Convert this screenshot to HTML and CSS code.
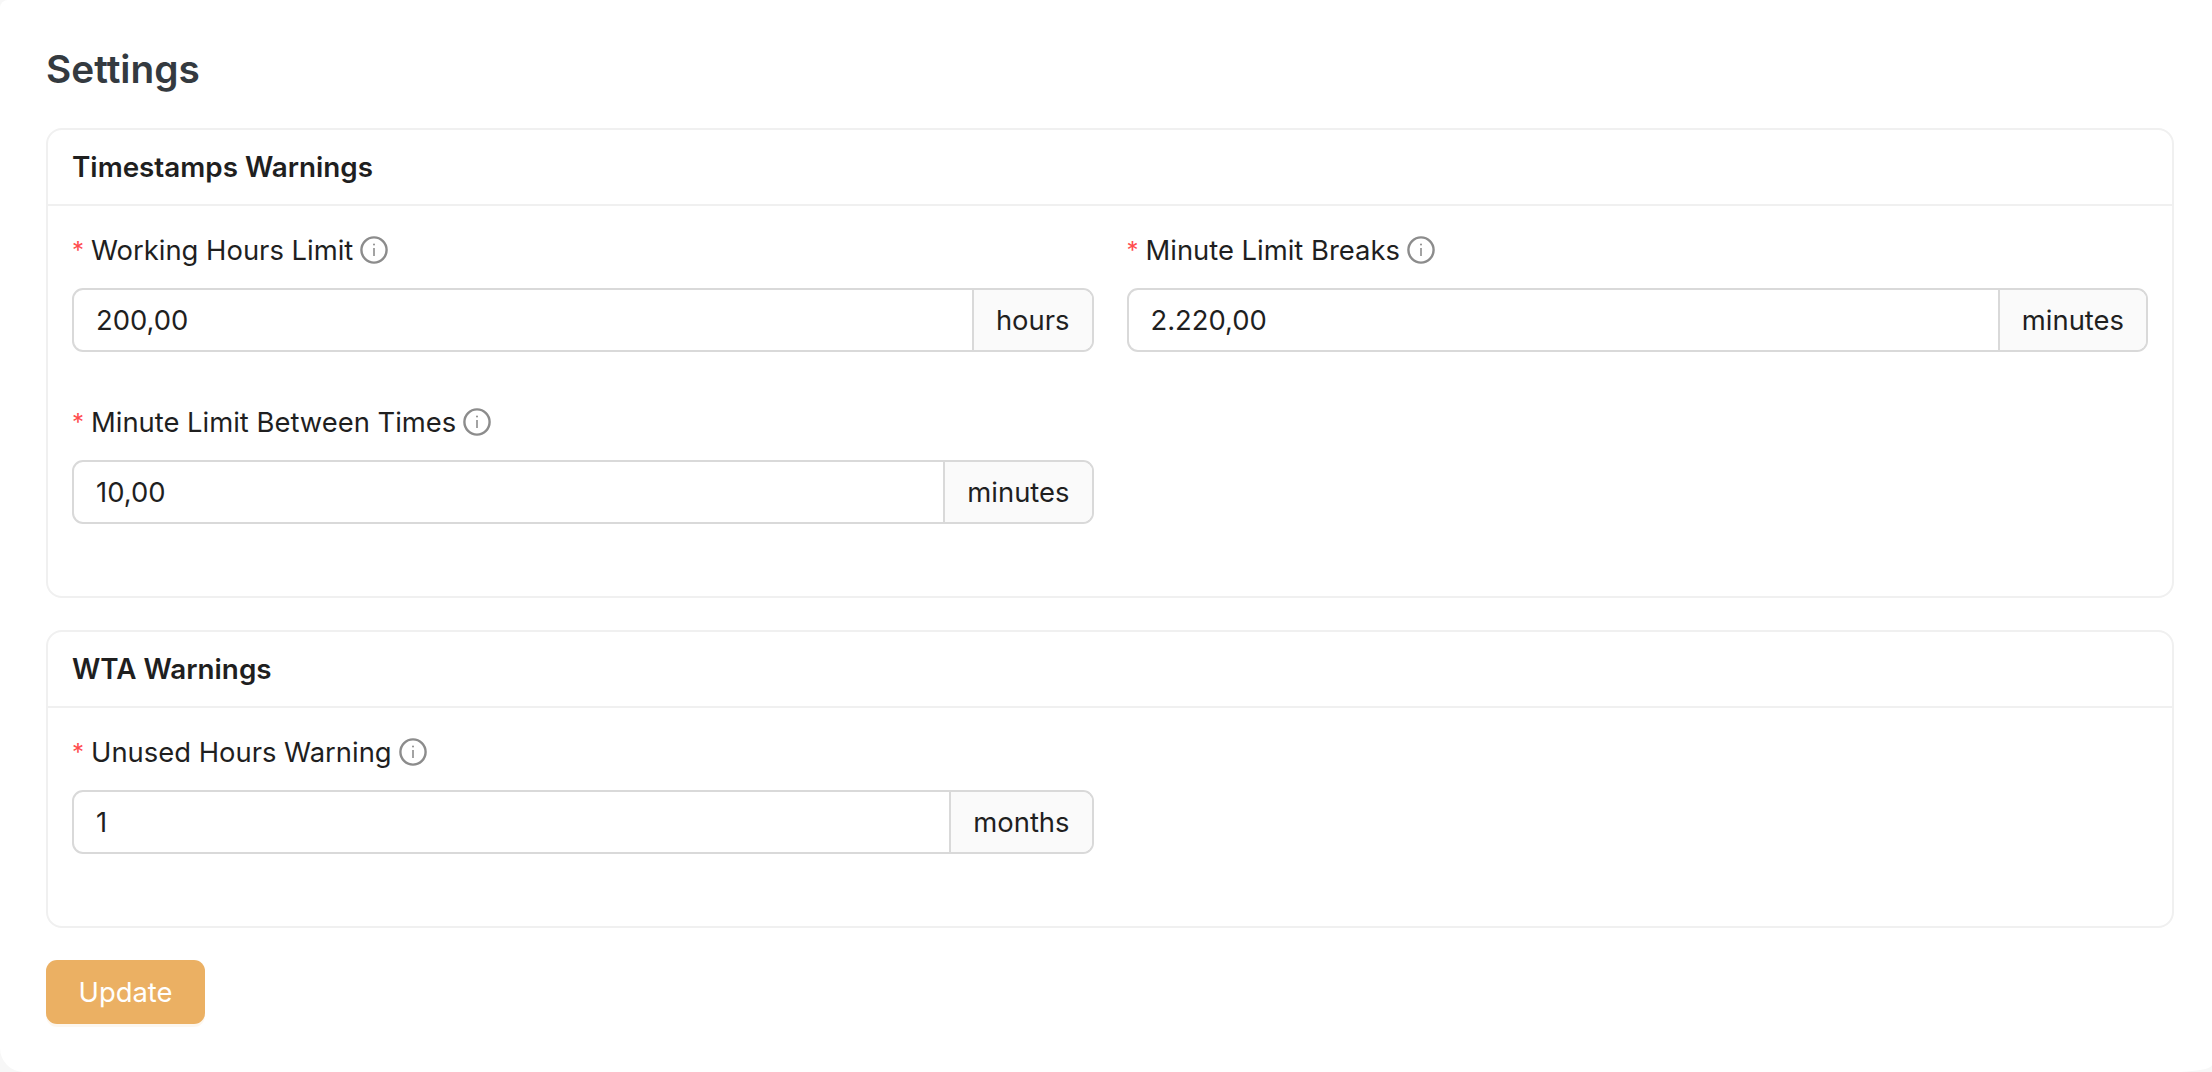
FILE: index.html
```html
<!DOCTYPE html>
<html lang="en">
<head>
  <meta charset="UTF-8">
  <title>Settings</title>
  <link rel="stylesheet" href="styles.css">
</head>
<body>
  <main class="page">
    <h1 class="page-title">Settings</h1>

    <section class="card">
      <h2 class="card-title">Timestamps Warnings</h2>
      <div class="card-body">
        <div class="field">
          <label class="field-label">
            <span class="required">*</span>Working Hours Limit
            <svg class="info" viewBox="0 0 28 28"><circle cx="14" cy="14" r="12.6"></circle><circle class="dot" cx="14" cy="8.6" r="1"></circle><line x1="14" y1="12" x2="14" y2="20"></line></svg>
          </label>
          <div class="input-group">
            <input class="input" type="text" value="200,00">
            <span class="addon">hours</span>
          </div>
        </div>
        <div class="field">
          <label class="field-label">
            <span class="required">*</span>Minute Limit Breaks
            <svg class="info" viewBox="0 0 28 28"><circle cx="14" cy="14" r="12.6"></circle><circle class="dot" cx="14" cy="8.6" r="1"></circle><line x1="14" y1="12" x2="14" y2="20"></line></svg>
          </label>
          <div class="input-group">
            <input class="input" type="text" value="2.220,00">
            <span class="addon">minutes</span>
          </div>
        </div>
        <div class="field">
          <label class="field-label">
            <span class="required">*</span>Minute Limit Between Times
            <svg class="info" viewBox="0 0 28 28"><circle cx="14" cy="14" r="12.6"></circle><circle class="dot" cx="14" cy="8.6" r="1"></circle><line x1="14" y1="12" x2="14" y2="20"></line></svg>
          </label>
          <div class="input-group">
            <input class="input" type="text" value="10,00">
            <span class="addon">minutes</span>
          </div>
        </div>
      </div>
    </section>

    <section class="card">
      <h2 class="card-title">WTA Warnings</h2>
      <div class="card-body">
        <div class="field">
          <label class="field-label">
            <span class="required">*</span>Unused Hours Warning
            <svg class="info" viewBox="0 0 28 28"><circle cx="14" cy="14" r="12.6"></circle><circle class="dot" cx="14" cy="8.6" r="1"></circle><line x1="14" y1="12" x2="14" y2="20"></line></svg>
          </label>
          <div class="input-group">
            <input class="input" type="text" value="1">
            <span class="addon">months</span>
          </div>
        </div>
      </div>
    </section>

    <button class="update-btn" type="button">Update</button>
  </main>
</body>
</html>
```

FILE: styles.css
```css
:root {
  --text: #1f1f1f;
  --card-border: #f0f0f0;
  --input-border: #d9d9d9;
  --radius: 11px;
}

* {
  margin: 0;
  padding: 0;
  box-sizing: border-box;
}

html, body {
  height: 100%;
}

body {
  font-family: Inter, "Noto Sans", sans-serif;
  font-size: 27.4px;
  color: var(--text);
  background-color: #f7f7f7;
}

.page {
  height: 1072px;
  background-color: white;
  border-top-left-radius: 8px;
  border-bottom-left-radius: 24px;
  border-bottom-right-radius: 40px 7px;
  padding: 42px 38px 0 46px;
}

.page-title {
  font-size: 38.8px;
  line-height: 54px;
  font-weight: 600;
  color: #343a40;
  margin-bottom: 32px;
}

.card {
  border: 2px solid var(--card-border);
  border-radius: 16px;
  margin-bottom: 32px;
}

.card-title {
  font-size: 27.8px;
  line-height: 36px;
  font-weight: 600;
  padding: 19px 24px;
  border-bottom: 2px solid var(--card-border);
}

.card-body {
  display: grid;
  grid-template-columns: 1fr 1fr;
  column-gap: 33px;
  padding: 25px 24px 21px;
}

.field {
  padding-bottom: 51px;
}

.field-label {
  display: flex;
  align-items: center;
  height: 38px;
  margin-bottom: 19px;
}

.required {
  color: #ff4d4f;
  font-size: 24px;
  width: 19px;
}

.info {
  width: 28px;
  height: 28px;
  margin-left: 7px;
  fill: none;
  stroke: #8c8c8c;
  stroke-width: 2.4;
}

.info line {
  stroke-width: 1.6;
}

.info .dot {
  fill: #8c8c8c;
  stroke: none;
}

.input-group {
  display: flex;
  height: 64px;
  border: 2px solid var(--input-border);
  border-radius: var(--radius);
}

.input {
  flex: 1;
  min-width: 0;
  border: none;
  outline: none;
  background: none;
  padding: 0 22px;
  font: inherit;
  color: var(--text);
}

.addon {
  display: flex;
  align-items: center;
  padding: 0 22px;
  background-color: #fafafa;
  border-left: 2px solid var(--input-border);
  border-radius: 0 9px 9px 0;
}

.update-btn {
  width: 159px;
  height: 64px;
  border: none;
  border-radius: var(--radius);
  background-color: #ebb063;
  color: white;
  font: inherit;
  box-shadow: 0 3px 0 rgba(235, 176, 99, 0.1);
}
```
